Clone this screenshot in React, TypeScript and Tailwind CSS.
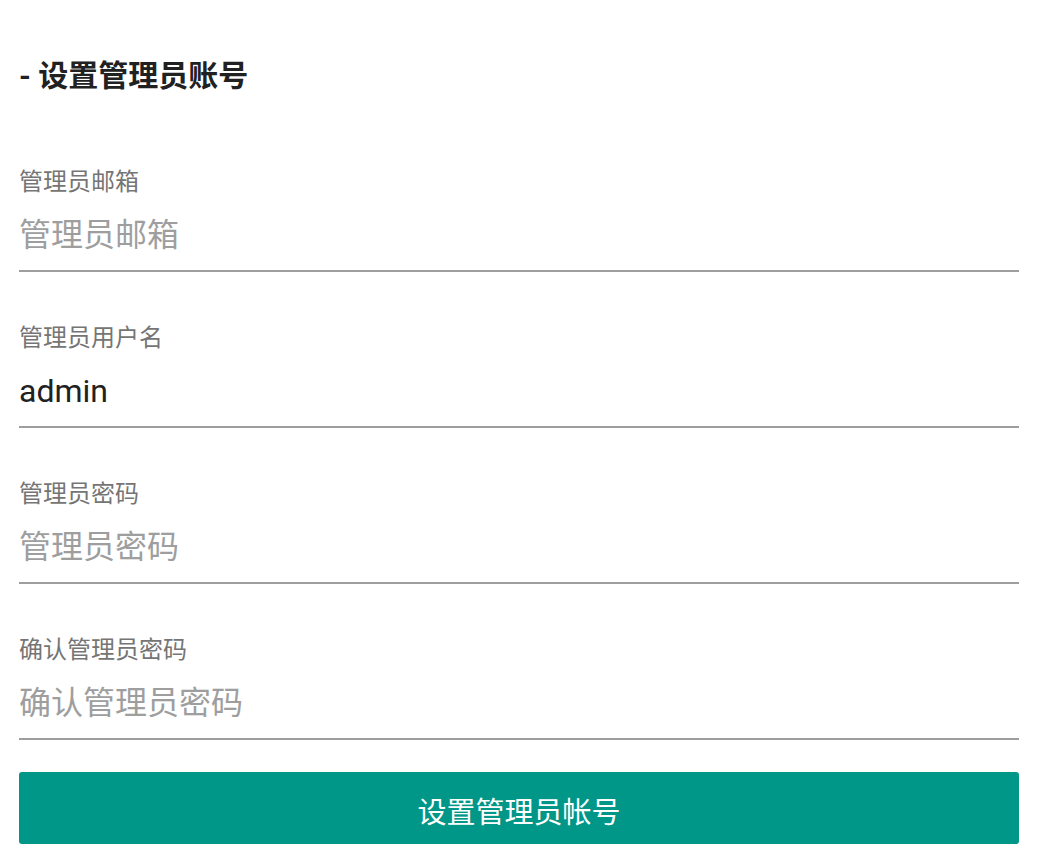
const fields = [
  { label: "管理员邮箱", placeholder: "管理员邮箱", value: "" },
  { label: "管理员用户名", placeholder: "管理员用户名", value: "admin" },
  { label: "管理员密码", placeholder: "管理员密码", value: "", type: "password" },
  { label: "确认管理员密码", placeholder: "确认管理员密码", value: "", type: "password" },
];

const font = "font-['Roboto','Noto_Sans_CJK_SC',sans-serif]";

export default function App() {
  return (
    <div className={`${font} bg-white min-h-[866px] pl-[19px] pr-[23px] pt-[56px] pb-[22px] w-[1042px]`}>
      <h2 className="text-[30px] font-bold leading-[40px] text-[#212121]">
        - 设置管理员账号
      </h2>
      <form className="mt-[71px] flex flex-col gap-[51px]" onSubmit={(e) => e.preventDefault()}>
        {fields.map((f) => (
          <div key={f.label} className="flex flex-col">
            <label className="text-[24px] leading-[30px] text-[#757575]">{f.label}</label>
            <input
              type={f.type ?? "text"}
              defaultValue={f.value}
              placeholder={f.placeholder}
              className="h-[75px] pt-[3px] w-full bg-transparent text-[32px] text-[#212121] placeholder:text-[#9e9e9e] border-b-2 border-[#9e9e9e] outline-none"
            />
          </div>
        ))}
      </form>
      <button className="mt-[32px] w-full h-[72px] pt-[12px] rounded-[3px] bg-[#009688] text-white text-[29px]">
        设置管理员帐号
      </button>
    </div>
  );
}
